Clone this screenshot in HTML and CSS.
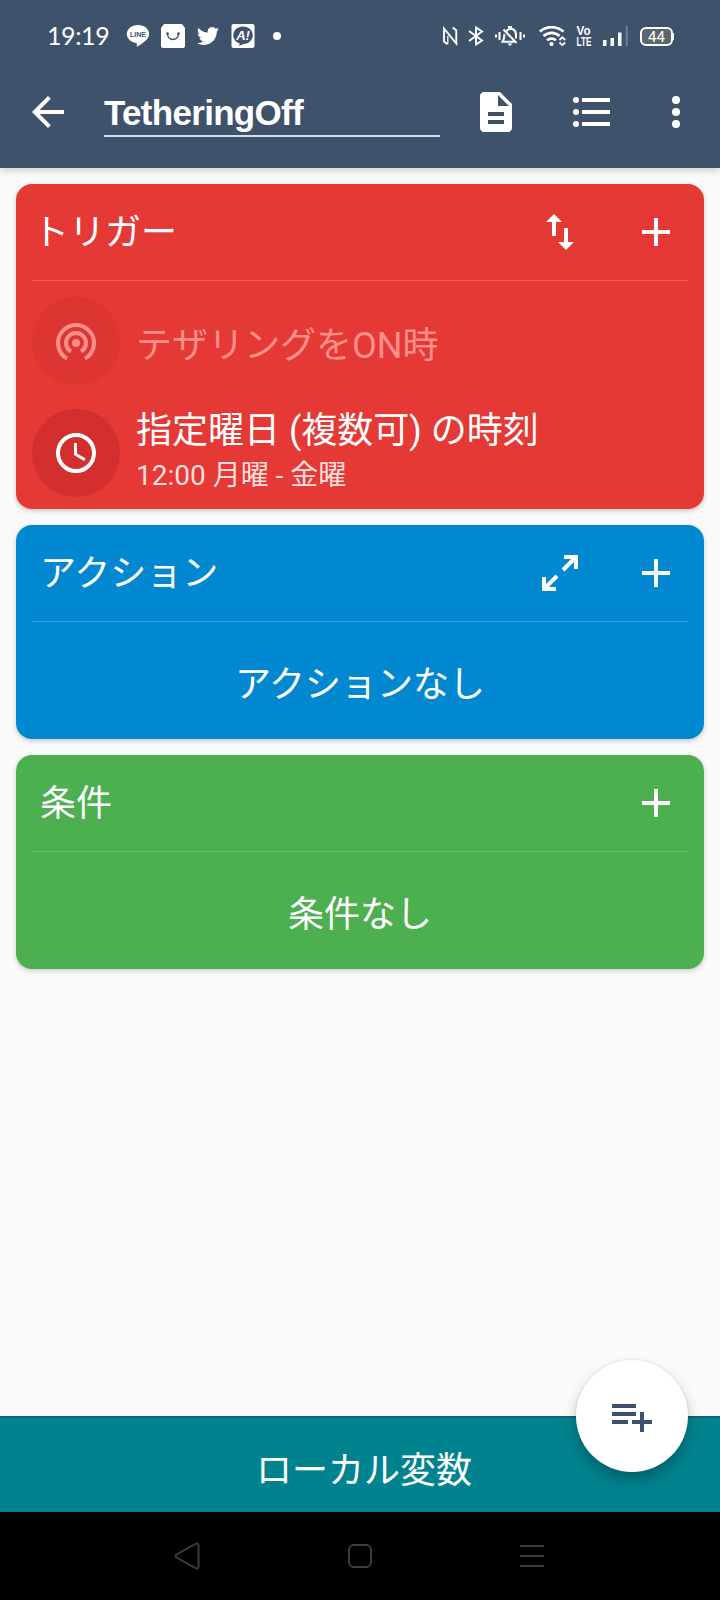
FILE: index.html
```html
<!DOCTYPE html>
<html lang="ja">
<head>
  <meta charset="UTF-8">
  <title>TetheringOff</title>
  <link rel="stylesheet" href="styles.css">
</head>
<body>

  <header class="header">
    <div class="statusbar">
      <span class="clock">19:19</span>
      <div class="notifications">
        <svg width="24" height="24" viewBox="0 0 24 24">
          <path fill="#fff" d="M12 1C5.800 1 .8 4.900 .8 10.100c0 4.500 3.900 8.100 9.200 8.800 1.200.3 1 .9.700 3 0 .6.300.8 1 .4 3-1.700 11.500-6.500 11.500-12.200C23.200 4.900 18.200 1 12 1z"/>
          <text x="12" y="12.700" class="line-label" textLength="16" lengthAdjust="spacingAndGlyphs">LINE</text>
        </svg>
        <svg width="24" height="24" viewBox="0 0 24 24">
          <path fill="#fff" d="M3 0h18l3 4v18a2 2 0 0 1-2 2H2a2 2 0 0 1-2-2V4z"/>
          <path fill="none" stroke="#3f526c" stroke-width="1.600" stroke-linecap="round" d="M6.500 9.500c0 8 11 8 11 0"/>
          <circle cx="6.500" cy="9.500" r="1.300" fill="#3f526c"/>
          <circle cx="17.500" cy="9.500" r="1.300" fill="#3f526c"/>
        </svg>
        <svg class="bird" width="24" height="24" viewBox="0 0 24 24">
          <path fill="#fff" d="M23.950 4.570a10 10 0 0 1-2.820.770 4.960 4.960 0 0 0 2.160-2.720c-.950.550-2 .950-3.130 1.180a4.920 4.920 0 0 0-8.380 4.480C7.690 8.090 4.070 6.130 1.640 3.160a4.920 4.920 0 0 0 1.520 6.570 4.900 4.900 0 0 1-2.230-.610v.060c0 2.390 1.700 4.380 3.950 4.830a5 5 0 0 1-2.210.080 4.940 4.940 0 0 0 4.600 3.420A9.870 9.870 0 0 1 0 19.540a14 14 0 0 0 7.550 2.210c9.050 0 14-7.500 14-13.980 0-.210 0-.420-.020-.630a10 10 0 0 0 2.420-2.570z"/>
        </svg>
        <svg width="24" height="24" viewBox="0 0 24 24">
          <rect x="0.500" y="0" width="23" height="24" rx="2" fill="#fff"/>
          <path fill="#3f526c" d="M12 2.500c-5.500 0-9.700 3.800-9.700 8.700 0 4 2.700 7.200 6.500 8.300l-.8 2.500 4.800-2c5-.3 9-4 9-8.800 0-4.900-4.300-8.700-9.800-8.700z"/>
          <text x="12" y="16" class="news-label">A!</text>
        </svg>
      </div>
      <span class="more-dot"></span>

      <div class="system">
        <svg class="nfc" width="16" height="20" viewBox="0 0 16 20">
          <path fill="none" stroke="#fff" stroke-width="1.900" d="M5.500 18.300L2 15.500V2.500L14.300 17.500V4.500L10.800 1.500"/>
          <path fill="none" stroke="#fff" stroke-width="1.300" d="M5.800 10v8"/>
        </svg>
        <svg class="bluetooth" width="16" height="20" viewBox="0 0 16 20">
          <path fill="none" stroke="#fff" stroke-width="2" d="M1 5l13 9.500-6 4V1.500l6 4L1 15"/>
        </svg>
        <svg class="silent" width="30" height="20" viewBox="0 0 30 20">
          <path fill="none" stroke="#fff" stroke-width="2" d="M1 8.500v3M4.500 6v8M25.500 6v8M29 8.500v3M11.500 5c4.500-4.500 9.500-1.500 9.500 4v3.500M9.500 8c-.5 3 0 5-2 7.800H21M8.500 3.500l13 13.500"/>
          <path fill="#fff" d="M13 0h4v2h-4zM12.500 17.500h5l-2.500 2.500z"/>
        </svg>
        <svg class="wifi" width="27" height="20" viewBox="0 0 27 20">
          <path fill="none" stroke="#fff" stroke-width="2.700" d="M.8 5.500c7-5.800 16.700-5.800 23.700 0M4.500 10c5-4.300 11.500-4.300 16 0M8 14.300c3-2.300 6-2.300 9 0"/>
          <circle cx="12.500" cy="18" r="2.100" fill="#fff"/>
          <path fill="none" stroke="#fff" stroke-width="1.800" d="M20.500 14l2.800-2.800 2.800 2.800M20.500 16.500l2.800 2.700 2.800-2.700"/>
        </svg>
        <svg class="volte" width="16" height="22" viewBox="0 0 16 22">
          <text x="0.500" y="10.300" textLength="14" lengthAdjust="spacingAndGlyphs">Vo</text>
          <text x="0.500" y="20.800" textLength="15" lengthAdjust="spacingAndGlyphs">LTE</text>
        </svg>
        <svg class="signal" width="26" height="20" viewBox="0 0 26 20">
          <path fill="#fff" d="M0 14h3.500v6H0zM7.500 12H11v8H7.500zM15 6.500h3.500V20H15z"/>
          <path fill="#69788e" d="M22.500 0H25v20h-2.500z"/>
        </svg>
        <div class="battery">44</div>
        <span class="battery-tip"></span>
      </div>
    </div>

    <div class="toolbar">
      <svg class="back" width="48" height="48" viewBox="0 0 24 24">
        <path fill="none" stroke="#fff" stroke-width="2" d="M20 12H5M12.700 4.700L5.400 12l7.300 7.300"/>
      </svg>
      <div class="macro-name">TetheringOff</div>
      <svg class="tool-doc" width="48" height="48" viewBox="0 0 24 24">
        <path fill="#fff" d="M14 2H6c-1.100 0-2 .9-2 2v16c0 1.100.9 2 2 2h12c1.100 0 2-.9 2-2V8zm2 16H8v-2h8zm0-4H8v-2h8zm-3-5V3.500L18.500 9z"/>
      </svg>
      <svg class="tool-list" width="48" height="48" viewBox="0 0 24 24">
        <path fill="#fff" d="M7 5h14v2H7zM7 11h14v2H7zM7 17h14v2H7z"/>
        <circle cx="4" cy="6" r="1.500" fill="#fff"/>
        <circle cx="4" cy="12" r="1.500" fill="#fff"/>
        <circle cx="4" cy="18" r="1.500" fill="#fff"/>
      </svg>
      <svg class="tool-more" width="48" height="48" viewBox="0 0 24 24">
        <circle cx="12" cy="6" r="2" fill="#fff"/>
        <circle cx="12" cy="12" r="2" fill="#fff"/>
        <circle cx="12" cy="18" r="2" fill="#fff"/>
      </svg>
    </div>
  </header>

  <main class="content">
    <section class="card trigger">
      <div class="card-head">
        <h2>トリガー</h2>
        <svg width="48" height="48" viewBox="0 0 24 24">
          <path fill="#fff" d="M9 3L5 7h3v7h2V7h3zM16 17v-7h-2v7h-3l4 4 4-4z"/>
        </svg>
        <svg width="48" height="48" viewBox="0 0 24 24">
          <path fill="#fff" d="M19 13h-6v6h-2v-6H5v-2h6V5h2v6h6z"/>
        </svg>
      </div>
      <div class="item disabled">
        <div class="item-icon">
          <svg width="48" height="48" viewBox="0 -1 24 24">
            <path fill="none" stroke="#ff8f8c" stroke-width="2" d="M7.500 19.800a9 9 0 1 1 9 0M9.500 16.300a5 5 0 1 1 5 0"/>
            <circle cx="12" cy="12" r="2" fill="#ff8f8c"/>
          </svg>
        </div>
        <div class="item-title">テザリングをON時</div>
      </div>
      <div class="item">
        <div class="item-icon">
          <svg width="48" height="48" viewBox="0 0 24 24">
            <circle cx="12" cy="12" r="9" fill="none" stroke="#fff" stroke-width="2"/>
            <path fill="none" stroke="#fff" stroke-width="1.500" d="M11.750 7v5.600l4.700 2.800"/>
          </svg>
        </div>
        <div class="item-text">
          <div class="item-title">指定曜日 (複数可) の時刻</div>
          <div class="item-sub">12:00 月曜 - 金曜</div>
        </div>
      </div>
    </section>

    <section class="card action">
      <div class="card-head">
        <h2>アクション</h2>
        <svg width="48" height="48" viewBox="0 0 24 24">
          <path fill="none" stroke="#fff" stroke-width="2" d="M14 4h6v6M19.500 4.500l-6 6M4 14v6h6M4.500 19.500l6-6"/>
        </svg>
        <svg width="48" height="48" viewBox="0 0 24 24">
          <path fill="#fff" d="M19 13h-6v6h-2v-6H5v-2h6V5h2v6h6z"/>
        </svg>
      </div>
      <div class="empty">アクションなし</div>
    </section>

    <section class="card condition">
      <div class="card-head">
        <h2>条件</h2>
        <svg width="48" height="48" viewBox="0 0 24 24">
          <path fill="#fff" d="M19 13h-6v6h-2v-6H5v-2h6V5h2v6h6z"/>
        </svg>
      </div>
      <div class="empty">条件なし</div>
    </section>
  </main>

  <footer class="variables">
    <span>ローカル変数</span>
    <div class="fab">
      <svg width="48" height="48" viewBox="0 0 24 24">
        <path fill="#3f526c" d="M14 10H2v2h12zM14 6H2v2h12zM18 14v-4h-2v4h-4v2h4v4h2v-4h4v-2zM2 16h8v-2H2z"/>
      </svg>
    </div>
  </footer>

  <nav class="navbar">
    <svg width="28" height="28" viewBox="0 0 28 28">
      <path d="M2.500 12.500L21.500 1.800q3-1.300 3 1.700v21q0 3-3 1.700L2.500 15.500q-2.500-1.500 0-3z"/>
    </svg>
    <svg width="28" height="28" viewBox="0 0 28 28">
      <rect x="3" y="3" width="22" height="22" rx="5"/>
    </svg>
    <svg width="28" height="28" viewBox="0 0 28 28">
      <path d="M2 4h24M2 14h24M2 24h24"/>
    </svg>
  </nav>

</body>
</html>
```

FILE: styles.css
```css
* {
  box-sizing: border-box;
}
body {
  margin: 0;
  width: 720px;
  height: 1600px;
  display: flex;
  flex-direction: column;
  background: #fafafa;
  color: #fff;
  font-family: Roboto, "Noto Sans CJK JP", sans-serif;
  overflow: hidden;
}
svg {
  display: block;
  flex: none;
}

/* header */
.header {
  height: 168px;
  background: #3f526c;
  box-shadow: 0 2px 8px rgba(0, 0, 0, 0.2);
}
.statusbar {
  height: 56px;
  padding: 16px 46px 0 47px;
  display: flex;
  align-items: center;
}
.clock {
  width: 63px;
  padding-bottom: 2px;
  font-family: Lato, sans-serif;
  font-size: 25px;
  line-height: 38px;
  letter-spacing: -0.4px;
}
.notifications {
  display: flex;
  gap: 11px;
  margin-left: 16px;
}
.bird {
  padding: 1px;
}
.line-label {
  font: bold 7.5px "Liberation Sans", sans-serif;
  text-anchor: middle;
  fill: #3f526c;
}
.news-label {
  font: italic bold 13px "Liberation Sans", sans-serif;
  text-anchor: middle;
  fill: #fff;
}
.more-dot {
  width: 8px;
  height: 8px;
  margin-left: 18px;
  border-radius: 50%;
  background: #fff;
}
.system {
  display: flex;
  align-items: center;
  margin-left: auto;
}
.bluetooth {
  margin-left: 10px;
}
.silent {
  margin-left: 11px;
}
.wifi {
  margin-left: 14px;
}
.volte {
  margin: 0 11px 0 10px;
  overflow: visible;
  fill: #fff;
  font: bold 13px "Liberation Sans", sans-serif;
}
.battery {
  width: 33px;
  height: 19px;
  margin-left: 11px;
  border: 2px solid #fff;
  border-radius: 6px;
  background: #5d6668;
  font-size: 15px;
  line-height: 16px;
  text-align: center;
}
.battery-tip {
  width: 1px;
  height: 7px;
  background: #fff;
}
.toolbar {
  height: 112px;
  padding: 0 20px 0 24px;
  display: flex;
  align-items: center;
}
.macro-name {
  width: 336px;
  height: 50px;
  margin-left: 32px;
  border-bottom: 2px solid #d9dde9;
  font: bold 35px/51px "Liberation Sans", sans-serif;
  letter-spacing: -0.7px;
}
.tool-doc {
  margin-left: 32px;
}
.tool-list {
  margin-left: 48px;
}
.tool-more {
  margin-left: 36px;
}

/* cards */
.content {
  flex: 1;
  padding: 16px;
  display: flex;
  flex-direction: column;
  gap: 16px;
}
.card {
  padding: 0 16px;
  border-radius: 16px;
  box-shadow: 0 2px 5px rgba(0, 0, 0, 0.2);
}
.trigger {
  height: 325px;
  background: #e53935;
}
.action {
  height: 214px;
  background: #0288d1;
}
.condition {
  height: 214px;
  background: #4caf50;
}
.card-head {
  height: 97px;
  padding: 0 8px;
  display: flex;
  align-items: center;
  gap: 48px;
  border-bottom: 1px solid rgba(255, 255, 255, 0.2);
}
.card-head h2 {
  flex: 1;
  margin: 0;
  padding-bottom: 6px;
  font-size: 36px;
  font-weight: 400;
}
.trigger h2 {
  margin-left: -7px;
}
.item {
  height: 88px;
  margin-top: 16px;
  display: flex;
  align-items: center;
  gap: 16px;
}
.item + .item {
  margin-top: 24px;
}
.item-icon {
  width: 88px;
  height: 88px;
  padding: 20px;
  border-radius: 50%;
  background: #d32f2f;
}
.item-text {
  padding-top: 2px;
}
.item-title {
  font-size: 36px;
  line-height: 44px;
}
.item-sub {
  font-size: 28px;
  line-height: 46px;
  color: #ffdfde;
}
.disabled .item-icon {
  background: #dc3532;
}
.disabled .item-title {
  padding-top: 9px;
  color: #ff8f8c;
}
.empty {
  height: 117px;
  padding-top: 5px;
  font-size: 36px;
  line-height: 117px;
  text-align: center;
}

/* bottom */
.variables {
  position: relative;
  height: 96px;
  padding-left: 8px;
  border-top: 2px solid #0a6670;
  background: #00838f;
  font-size: 36px;
  line-height: 107px;
  text-align: center;
}
.fab {
  position: absolute;
  right: 32px;
  top: -58px;
  width: 112px;
  height: 112px;
  padding: 32px;
  border-radius: 50%;
  background: #fff;
  box-shadow: 0 8px 14px rgba(0, 0, 0, 0.25), 0 0 3px rgba(0, 0, 0, 0.1);
}
.navbar {
  height: 88px;
  background: #000;
  display: flex;
  align-items: center;
  justify-content: center;
  gap: 144px;
}
.navbar svg {
  fill: none;
  stroke: #3c3c3c;
  stroke-width: 2;
}
```
